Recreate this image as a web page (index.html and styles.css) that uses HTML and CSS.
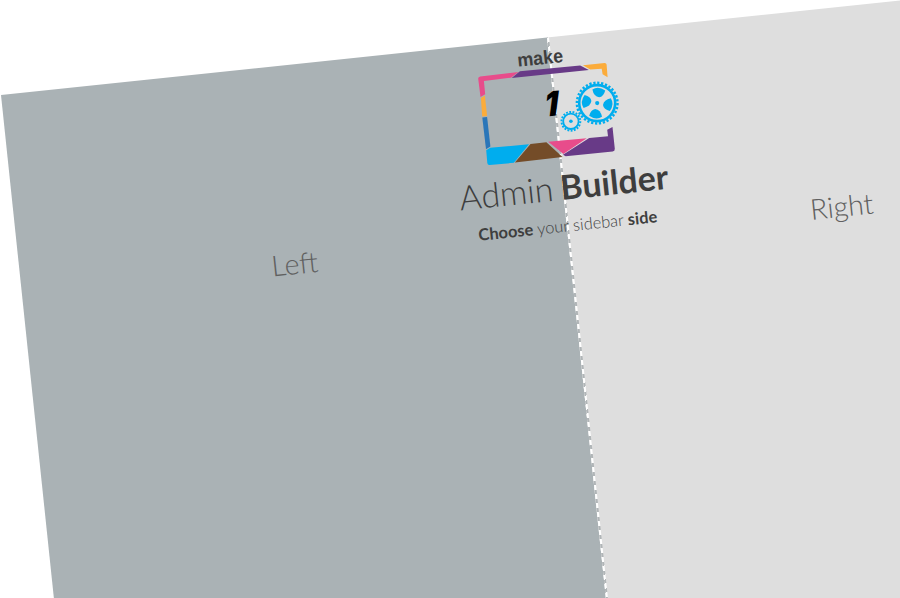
FILE: index.html
```html
<!DOCTYPE html>
<html lang="en">
<head>
<meta charset="utf-8">
<title>Admin Builder</title>
<link rel="stylesheet" href="styles.css">
</head>
<body>
<div class="viewport">
<main class="stage">
  <section class="side side-left"><h2 class="side-name">Left</h2></section>
  <section class="side side-right"><h2 class="side-name">Right</h2></section>
  <header class="brand">
    <svg class="logo" viewBox="470 0 160 130" width="160" height="130">
      <text class="logo-make" x="517" y="26" textLength="46" lengthAdjust="spacingAndGlyphs">make</text>
      <g transform="rotate(6) translate(-.8 -94.7)">
        <path fill="#e84c8b" d="M480 76.1L518.3 71.7 510.7 77.4 483.7 80.7 485 94 480.3 96.7 478 78.5Q477.9 76.3 480 76.1Z"/>
        <path fill="#683a87" d="M519.7 71L580 65.2 588.7 69.7 511.5 77.8Z"/>
        <path fill="#fbac3b" d="M582.7 65L604.5 62.7Q606.2 62.7 606.4 64.3L607.4 77 602.4 74 601.5 68.4 590 69.3Z"/>
        <path fill="#fbac3b" d="M480.7 97.6L484.7 95.2 486.9 115.7 482 116.2Z"/>
        <path fill="#2a76b9" d="M482.1 117.2L486.9 116.7 490.2 146.3 485.8 148.9Z"/>
        <path fill="#00adee" d="M486 150L490 147.5 528.8 144 513.7 162.5 489.3 164.7Q487.4 164.9 487.1 162.6Z"/>
        <path fill="#744c28" d="M530.3 143.6L546.2 141.9 562.3 156.8 514.7 162.2Z"/>
        <path fill="#e84c8b" d="M548 141.5L586.5 138 563.2 153.8Z"/>
        <path fill="#683a87" d="M589 137.7L607.8 136 607 129.5 612.3 126.7 614.6 148.5Q614.7 150.9 612.5 151.2L565.5 156 562.8 154.5Z"/>
        <g transform="translate(597 102.8)" fill="none" stroke="#00adee">
          <circle r="20.3" stroke-width="2.5" pathLength="96" stroke-dasharray="1.7 1.3"/>
          <circle r="18" stroke-width="2.6"/>
          <g fill="#00adee" stroke="none">
            <circle r="2.1"/>
            <path id="vane" d="M-4.8-13.6Q1-17.6 8-12.6 6.4-6.4 2-5.8-3.4-6.6-4.8-13.6Z"/>
            <use href="#vane" transform="rotate(90)"/>
            <use href="#vane" transform="rotate(180)"/>
            <use href="#vane" transform="rotate(270)"/>
          </g>
        </g>
        <g transform="translate(570.7 121)" fill="none" stroke="#00adee">
          <circle r="9.4" stroke-width="2" pathLength="54" stroke-dasharray="1.7 1.3"/>
          <circle r="7.7" stroke-width="1.8"/>
          <circle r="1.8" fill="#00adee" stroke="none"/>
        </g>
      </g>
      <text class="logo-one" transform="translate(538.6 78.4) skewX(-5) scale(.9 1)">1</text>
    </svg>
    <h1 class="title">Admin <b>Builder</b></h1>
    <p class="hint"><b>Choose</b> your sidebar <b>side</b></p>
  </header>
</main>
</div>
</body>
</html>
```
FILE: styles.css
```css
body {
  margin: 0;
  background: #fff;
  color: #3e3e3e;
  font-family: Lato, "Liberation Sans", sans-serif;
}

.viewport {
  display: flow-root;
  height: 598px;
  overflow: hidden;
}

.stage {
  position: relative;
  display: flex;
  width: 1100px;
  height: 700px;
  margin: 94.7px 0 0 .8px;
  transform: rotate(-6deg);
  transform-origin: 0 0;
}

.side {
  box-sizing: border-box;
  padding-top: 179.5px;
  text-align: center;
  background: #dedede;
}

.side-left {
  width: 548.8px;
  background: #aab2b5;
}

.side-right {
  flex: 1;
  background: repeating-linear-gradient(#fff 0 5px, #b0b5b7 5px 9px) 0 0 / 2px 100% no-repeat #dedede;
}

.side-name {
  margin: 0;
  font-size: 28.6px;
  line-height: 36px;
  font-weight: 300;
  color: #606060;
}

.brand {
  position: absolute;
  inset: 0;
  text-align: center;
}

.logo {
  display: block;
  margin-left: 470px;
}

.logo-make {
  font: bold 19px "Liberation Sans", sans-serif;
  fill: #3e3e3e;
}

.logo-one {
  font: italic 900 34px Inter, sans-serif;
  fill: #000;
}

.title {
  margin: -3px 0 0;
  font-size: 34px;
  line-height: 46px;
  font-weight: 300;
  word-spacing: -2px;
}

.title b,
.hint b {
  font-weight: 700;
}

.hint {
  margin: 3px 0 0;
  font-size: 16.4px;
  line-height: 26px;
  font-weight: 300;
}
```
